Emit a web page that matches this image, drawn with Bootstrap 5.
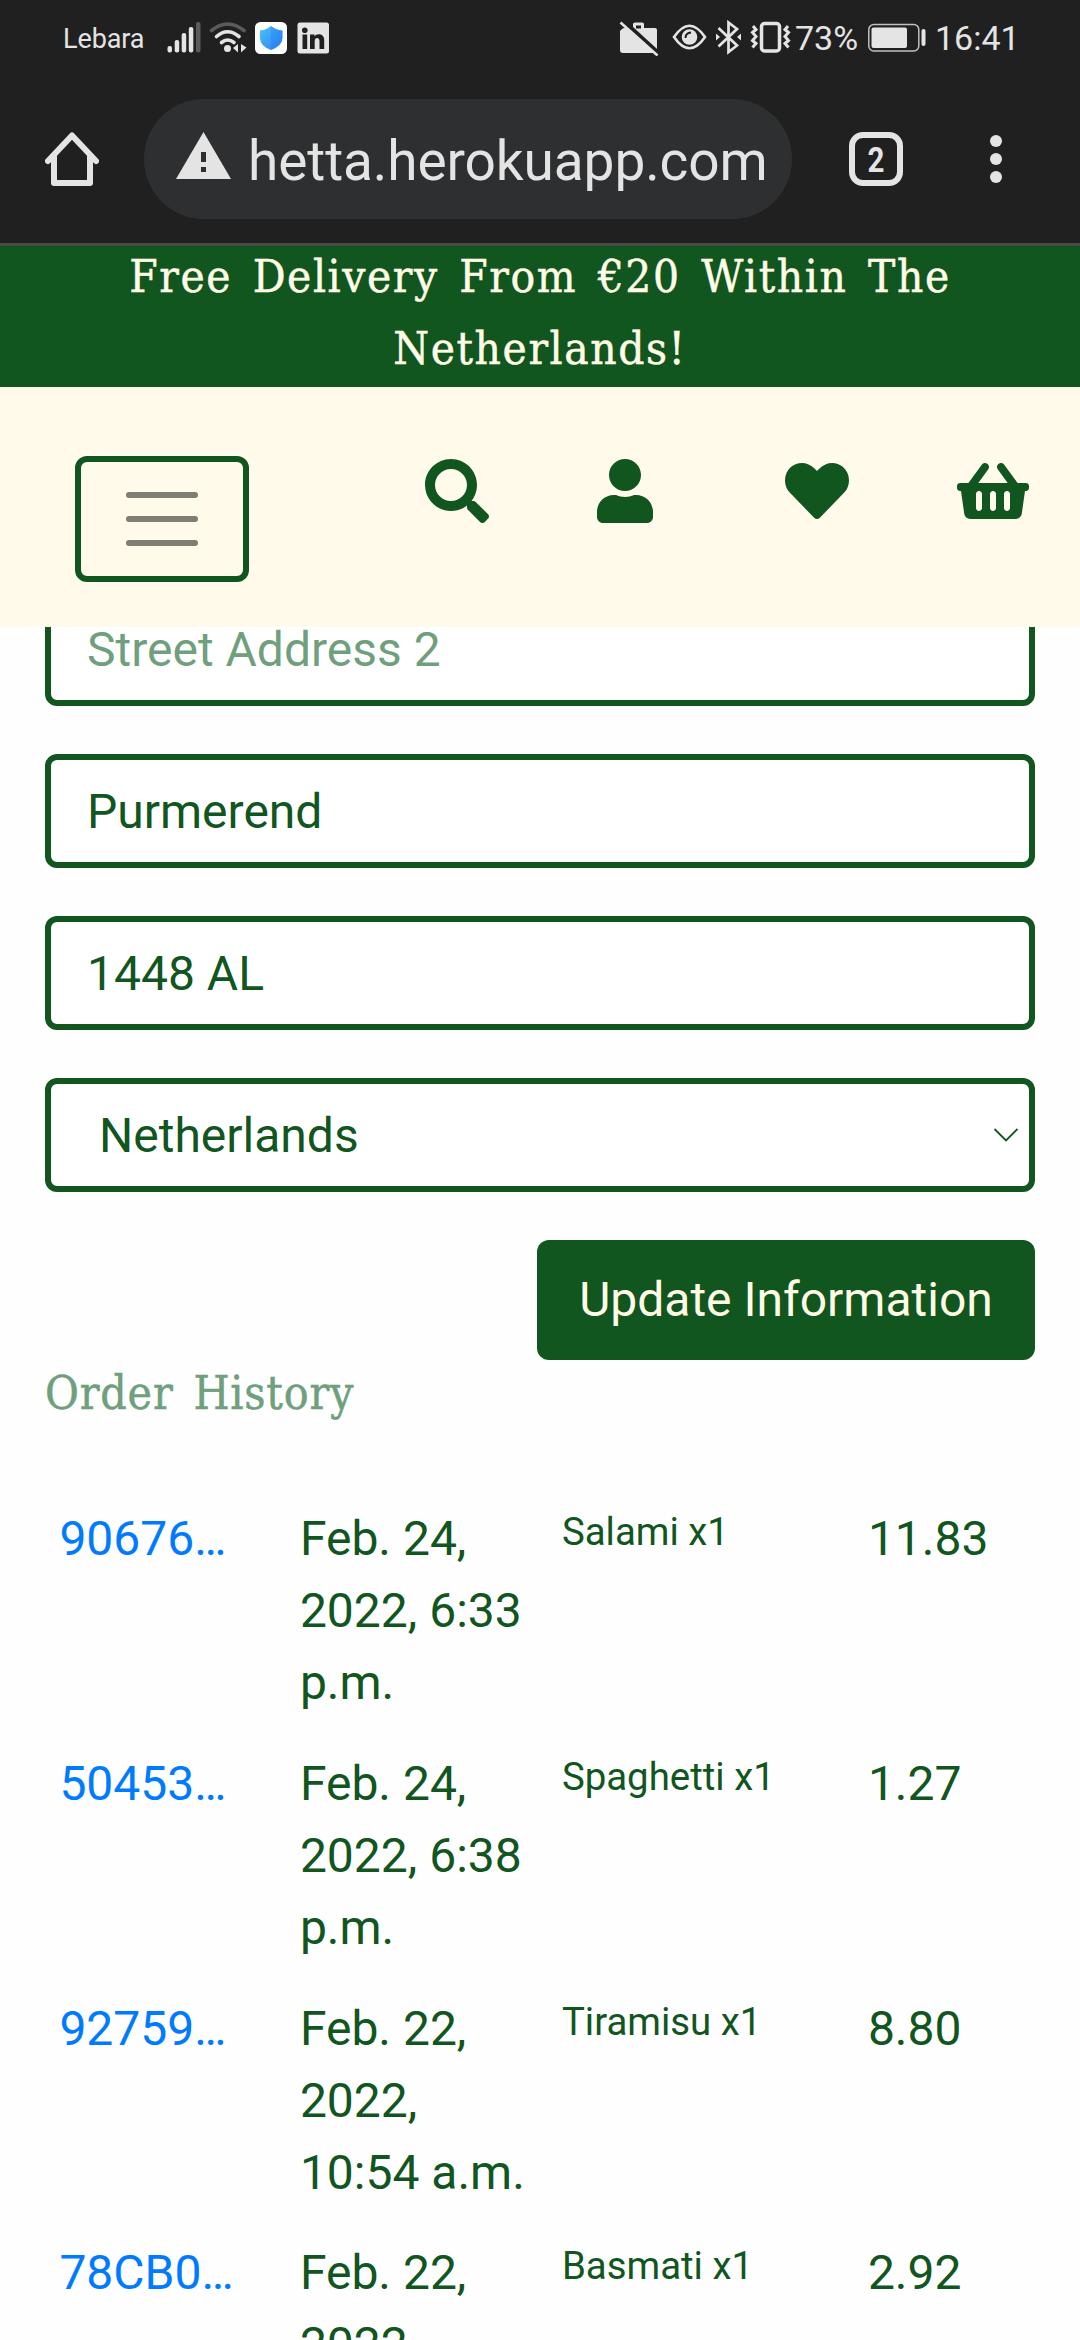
<!DOCTYPE html>
<html lang="en">
<head>
<meta charset="utf-8">
<meta name="viewport" content="width=device-width, initial-scale=1">
<title>Profile</title>
<link rel="stylesheet" href="https://cdn.jsdelivr.net/npm/bootstrap@5.3.0/dist/css/bootstrap.min.css">
<style>
:root { --leaf: #11551f; --cream: #fffaea; --chrome: #202020; --ink: #e4e4e4; }
html, body { height: 2340px; overflow: hidden; }
body { font-family: Roboto, sans-serif; font-size: 48px; line-height: 72px; color: var(--leaf); background: #fefefe; }
svg { display: block; flex: none; }
.slab { font-family: "DejaVu Serif Condensed", "DejaVu Serif", serif; font-stretch: condensed; -webkit-text-stroke: .5px currentColor; }
.phone-top { background: var(--chrome); height: 243px; color: var(--ink); }
.status { height: 76px; line-height: 36px; padding: 20px 0 20px 63px; }
.carrier { width: 103px; font-size: 27px; padding-top: 1px; letter-spacing: -.1px; }
.status-num { font-size: 34px; white-space: nowrap; }
.address-bar { height: 167px; padding: 23px 0 0 45px; }
.omnibox { width: 648px; height: 120px; border-radius: 60px; background: #2e2f31; margin-left: 45px; padding-left: 32px; }
.url-text { font-size: 55px; margin-left: 17px; white-space: nowrap; letter-spacing: -.1px; padding-top: 4px; }
.promo { background: var(--leaf); color: #fffbe6; height: 144px; border-top: 3px solid #4a4a4a; font-size: 45.5px; letter-spacing: 1.6px; word-spacing: 6px; }
.promo span { display: block; margin-top: -5px; }
.promo span + span { margin-top: 0; }
.site-nav { background: var(--cream); height: 240px; padding: 69px 51px 0 75px; z-index: 2; }
.menu-btn { width: 174px; height: 126px; border: 6px solid var(--leaf); border-radius: 12px; padding: 0; }
.nav-icons { padding-top: 3px; fill: var(--leaf); }
.gap-narrow { margin-left: 108px; }
.gap-wide { margin-left: 132px; }
main { margin-top: -35px; padding: 0 45px; }
.field { height: 114px; border: 6px solid var(--leaf) !important; border-radius: 12px; padding: 0 36px; font-size: 48px; line-height: 72px; color: var(--leaf) !important; background-color: #fff; margin-bottom: 48px; }
.field::placeholder { color: #6f9f7d; opacity: 1; }
select.field { padding-left: 48px; padding-top: 1px; background-image: url("data:image/svg+xml,%3Csvg xmlns='http://www.w3.org/2000/svg' viewBox='0 0 26 16'%3E%3Cpath d='M1.5 2L13 13.5 24.5 2' fill='none' stroke='%2311551f' stroke-width='1.8'/%3E%3C/svg%3E"); background-size: 26px 16px; background-position: right 10px center; }
.save-btn { width: 498px; height: 120px; background: var(--leaf); color: #fffbe6; border: 0; border-radius: 12px; font-size: 48px; padding: 0; }
.history-title { font-size: 46px; line-height: 66px; color: #6f9f7d; height: 128.6px; margin: 0; white-space: nowrap; letter-spacing: .8px; word-spacing: 6px; }
.orders { width: 990px; table-layout: fixed; --bs-table-bg: transparent; }
.orders td { border: 0; padding: 14.4px; color: var(--leaf); }
.orders a { color: #007bff; text-decoration: none; }
.orders ul { font-size: 38.4px; line-height: 57.6px; white-space: nowrap; }
</style>
</head>
<body>
<header class="phone-top">
  <div class="status d-flex align-items-start">
    <span class="carrier">Lebara</span>
    <svg width="40" height="36" viewBox="166 20 40 36" fill="#e4e4e4"><rect x="167.5" y="46" width="4.5" height="6.5" rx="2"/><rect x="174.7" y="40" width="4.5" height="12.5" rx="2"/><rect x="181.7" y="33" width="4.5" height="19.500" rx="2"/><rect x="188.800" y="27" width="4.5" height="25.500" rx="2"/><rect x="196" y="22" width="4.5" height="30.500" rx="2" fill="#5b5b5b"/></svg>
    <svg width="48" height="36" viewBox="206 20 48 36" fill="none" stroke="#e4e4e4" stroke-width="3.600" stroke-linecap="round"><path d="M211.500 30.500Q227.500 17.500 244 30.500" stroke="#5b5b5b"/><path d="M216.500 36.500Q227.500 27 239 36.500M221.500 42.500Q227.500 37.500 234 42.500"/><circle cx="227.500" cy="48.500" r="3.500" fill="#e4e4e4" stroke="none"/><path d="M233 48l5-4v8.500zM241 44v8.500l5.500-5z" fill="#e4e4e4" stroke="none"/></svg>
    <svg width="42" height="36" viewBox="254 20 42 36"><defs><linearGradient id="sh" x2="1" y2="1"><stop stop-color="#47c5f8"/><stop offset="1" stop-color="#2e7cf3"/></linearGradient></defs><rect x="255" y="22" width="32" height="32" rx="5.500" fill="#fff"/><path d="M271 26Q276 30 282.500 30.500V38Q282 46 271 50 260 46 260 38V30.500Q266 30 271 26z" fill="url(#sh)"/><path d="M271 26Q276 30 282.500 30.500V38Q282 46 271 50z" fill="#2479f0" opacity=".3"/></svg>
    <svg width="36" height="36" viewBox="296 20 36 36"><rect x="297.500" y="22.500" width="31.500" height="31" rx="2.500" fill="#e4e4e4"/><g fill="#202020"><circle cx="304.800" cy="30.300" r="2.800"/><path d="M302.500 34.500h4.700V49h-4.700zM310 34.500h4.500v2c2-3.500 9.700-3.200 9.700 3.500v9h-4.700v-8c0-4-4.800-4-4.800 0v8H310z"/></g></svg>
    <svg class="ms-auto" width="50" height="36" viewBox="617 20 50 36"><path d="M621 29q1-1 3-1h30q2 0 2 2v20q0 3-3 3H622q-3 0-3-3V31zM632 29v-5q0-1.500 2-1.500h7q2 0 2 1.500v5" fill="#e4e4e4"/><path d="M635 25.500h5v3h-5z" fill="#202020"/><path d="M622 20.500l36 33" stroke="#202020" stroke-width="4"/><path d="M619.500 22.500l37 33" stroke="#e4e4e4" stroke-width="2.600"/></svg>
    <svg width="44" height="36" viewBox="667 20 44 36"><path d="M673 37q15.500-22.500 31 0-15.500 22.500-31 0z" fill="none" stroke="#e4e4e4" stroke-width="2.600"/><circle cx="688.500" cy="37" r="7.800" fill="#e4e4e4"/><path d="M684.500 38q0-5 5.500-5.500" fill="none" stroke="#202020" stroke-width="2"/></svg>
    <svg width="37" height="36" viewBox="711 20 37 36"><path d="M717.500 28L736 45.500 727.500 52V22.500L736 29 717.500 46.500" fill="none" stroke="#e4e4e4" stroke-width="2.700"/><path d="M715 33.500v7l4-3.500zM740 33.500v7l-4-3.500z" fill="#e4e4e4"/></svg>
    <svg width="46" height="36" viewBox="748 20 46 36" fill="none" stroke="#e4e4e4"><rect x="760.500" y="23.500" width="18" height="27.500" rx="3" stroke-width="3.500"/><path d="M752 26l3 3.500-3.500 3 3.500 4-3.500 4 3.500 3-3.500 4M787 26l-3 3.500 3.500 3-3.500 4 3.500 4-3.500 3 3.500 4" stroke-width="3"/></svg>
    <span class="status-num" style="width:71px">73%</span>
    <svg width="69" height="36" viewBox="865 20 69 36"><rect x="867.800" y="24.500" width="50" height="26.500" rx="5" fill="none" stroke="#c0c0c0" stroke-width="1.500"/><rect x="870.500" y="27.500" width="35.500" height="20.500" rx="2" fill="#e4e4e4"/><rect x="920.500" y="29" width="4" height="17" rx="2" fill="#e4e4e4"/></svg>
    <span class="status-num" style="width:145px">16:41</span>
  </div>
  <div class="address-bar d-flex">
    <svg width="54" height="120" viewBox="45 99 54 120"><path d="M48 161L72 135.500 96 161M54 156v27h36v-27" fill="none" stroke="#e4e4e4" stroke-width="6" stroke-linecap="round" stroke-linejoin="round"/></svg>
    <div class="omnibox d-flex align-items-center">
      <svg width="55" height="120" viewBox="176 99 55 120"><path d="M203.500 132L231 179h-55z" fill="#e4e4e4"/><path d="M201 152h5v10h-5zM201 167h5v5h-5z" fill="#2e2f31"/></svg>
      <span class="url-text">hetta.herokuapp.com</span>
    </div>
    <svg width="288" height="120" viewBox="792 99 288 120"><rect x="852" y="135" width="48" height="48" rx="11" fill="none" stroke="#e4e4e4" stroke-width="6"/><text x="0" y="0" transform="translate(876 171.500) scale(.82 1)" text-anchor="middle" font-family="Roboto, sans-serif" font-weight="700" font-size="36" fill="#e4e4e4">2</text><g fill="#e4e4e4"><circle cx="996" cy="141" r="6"/><circle cx="996" cy="159" r="6"/><circle cx="996" cy="177" r="6"/></g></svg>
  </div>
</header>

<div class="promo slab text-center text-nowrap"><span>Free Delivery From €20 Within The</span><span>Netherlands!</span></div>

<nav class="site-nav position-relative d-flex justify-content-between align-items-start">
  <button class="menu-btn bg-transparent d-flex align-items-center justify-content-center" aria-label="Menu">
    <svg width="72" height="54" viewBox="0 0 72 54"><path d="M3 3h66M3 27h66M3 51h66" stroke="#807d75" stroke-width="6" stroke-linecap="round"/></svg>
  </button>
  <div class="nav-icons d-flex">
    <svg width="64" height="64" viewBox="0 0 512 512"><path d="M505 442.700L405.300 343c-4.500-4.500-10.600-7-17-7H372c27.600-35.300 44-79.700 44-128C416 93.100 322.900 0 208 0S0 93.100 0 208s93.100 208 208 208c48.300 0 92.700-16.400 128-44v16.300c0 6.400 2.500 12.500 7 17l99.700 99.700c9.400 9.400 24.600 9.400 33.900 0l28.300-28.300c9.400-9.400 9.400-24.600.1-34zM208 336c-70.700 0-128-57.200-128-128 0-70.700 57.200-128 128-128 70.700 0 128 57.200 128 128 0 70.700-57.200 128-128 128z"/></svg>
    <svg class="gap-narrow" width="56" height="64" viewBox="0 0 448 512"><path d="M224 256c70.700 0 128-57.300 128-128S294.700 0 224 0 96 57.300 96 128s57.300 128 128 128zm89.600 32h-16.700c-22.200 10.200-46.900 16-72.900 16s-50.600-5.800-72.900-16h-16.700C60.200 288 0 348.200 0 422.400V464c0 26.500 21.500 48 48 48h352c26.500 0 48-21.500 48-48v-41.600c0-74.200-60.200-134.400-134.400-134.400z"/></svg>
    <svg class="gap-wide" width="64" height="64" viewBox="0 0 512 512"><path d="M462.300 62.600C407.500 15.900 326 24.300 275.700 76.200L256 96.500l-19.700-20.300C186.100 24.300 104.500 15.900 49.700 62.600c-62.800 53.600-66.100 149.800-9.900 207.900l193.500 199.800c12.500 12.900 32.800 12.900 45.300 0l193.500-199.800c56.300-58.100 53-154.300-9.800-207.900z"/></svg>
    <svg class="gap-narrow" width="72" height="64" viewBox="0 0 576 512"><path d="M576 216v16c0 13.255-10.745 24-24 24h-8l-26.113 182.788C514.509 462.435 494.257 480 470.370 480H105.630c-23.887 0-44.139-17.565-47.518-41.212L32 256h-8c-13.255 0-24-10.745-24-24v-16c0-13.255 10.745-24 24-24h67.341l106.780-146.821c10.395-14.292 30.407-17.453 44.701-7.058 14.293 10.395 17.453 30.408 7.058 44.701L170.477 192h235.046L326.120 82.821c-10.395-14.292-7.234-34.306 7.059-44.701 14.291-10.395 34.306-7.235 44.701 7.058L484.659 192H552c13.255 0 24 10.745 24 24zM312 392V280c0-13.255-10.745-24-24-24s-24 10.745-24 24v112c0 13.255 10.745 24 24 24s24-10.745 24-24zm112 0V280c0-13.255-10.745-24-24-24s-24 10.745-24 24v112c0 13.255 10.745 24 24 24s24-10.745 24-24zm-224 0V280c0-13.255-10.745-24-24-24s-24 10.745-24 24v112c0 13.255 10.745 24 24 24s24-10.745 24-24z"/></svg>
  </div>
</nav>

<main>
  <form>
    <input class="form-control field" placeholder="Street Address 2">
    <input class="form-control field" value="Purmerend">
    <input class="form-control field" value="1448 AL">
    <select class="form-select field"><option>Netherlands</option></select>
    <div class="d-flex justify-content-end"><button type="button" class="btn save-btn">Update Information</button></div>
  </form>
  <p class="history-title slab">Order History</p>
  <table class="table table-sm table-borderless orders mb-0">
    <colgroup><col style="width:240.500px"><col style="width:262px"><col style="width:306px"><col></colgroup>
    <tbody>
      <tr><td><a href="#">90676…</a></td><td>Feb. 24, 2022, 6:33 p.m.</td><td><ul class="list-unstyled mb-0"><li>Salami x1</li></ul></td><td>11.83</td></tr>
      <tr><td><a href="#">50453…</a></td><td>Feb. 24, 2022, 6:38 p.m.</td><td><ul class="list-unstyled mb-0"><li>Spaghetti x1</li></ul></td><td>1.27</td></tr>
      <tr><td><a href="#">92759…</a></td><td>Feb. 22, 2022, 10:54 a.m.</td><td><ul class="list-unstyled mb-0"><li>Tiramisu x1</li></ul></td><td>8.80</td></tr>
      <tr><td><a href="#">78CB0…</a></td><td>Feb. 22, 2022,</td><td><ul class="list-unstyled mb-0"><li>Basmati x1</li></ul></td><td>2.92</td></tr>
    </tbody>
  </table>
</main>
<script src="https://cdn.jsdelivr.net/npm/bootstrap@5.3.0/dist/js/bootstrap.bundle.min.js"></script>
</body>
</html>
